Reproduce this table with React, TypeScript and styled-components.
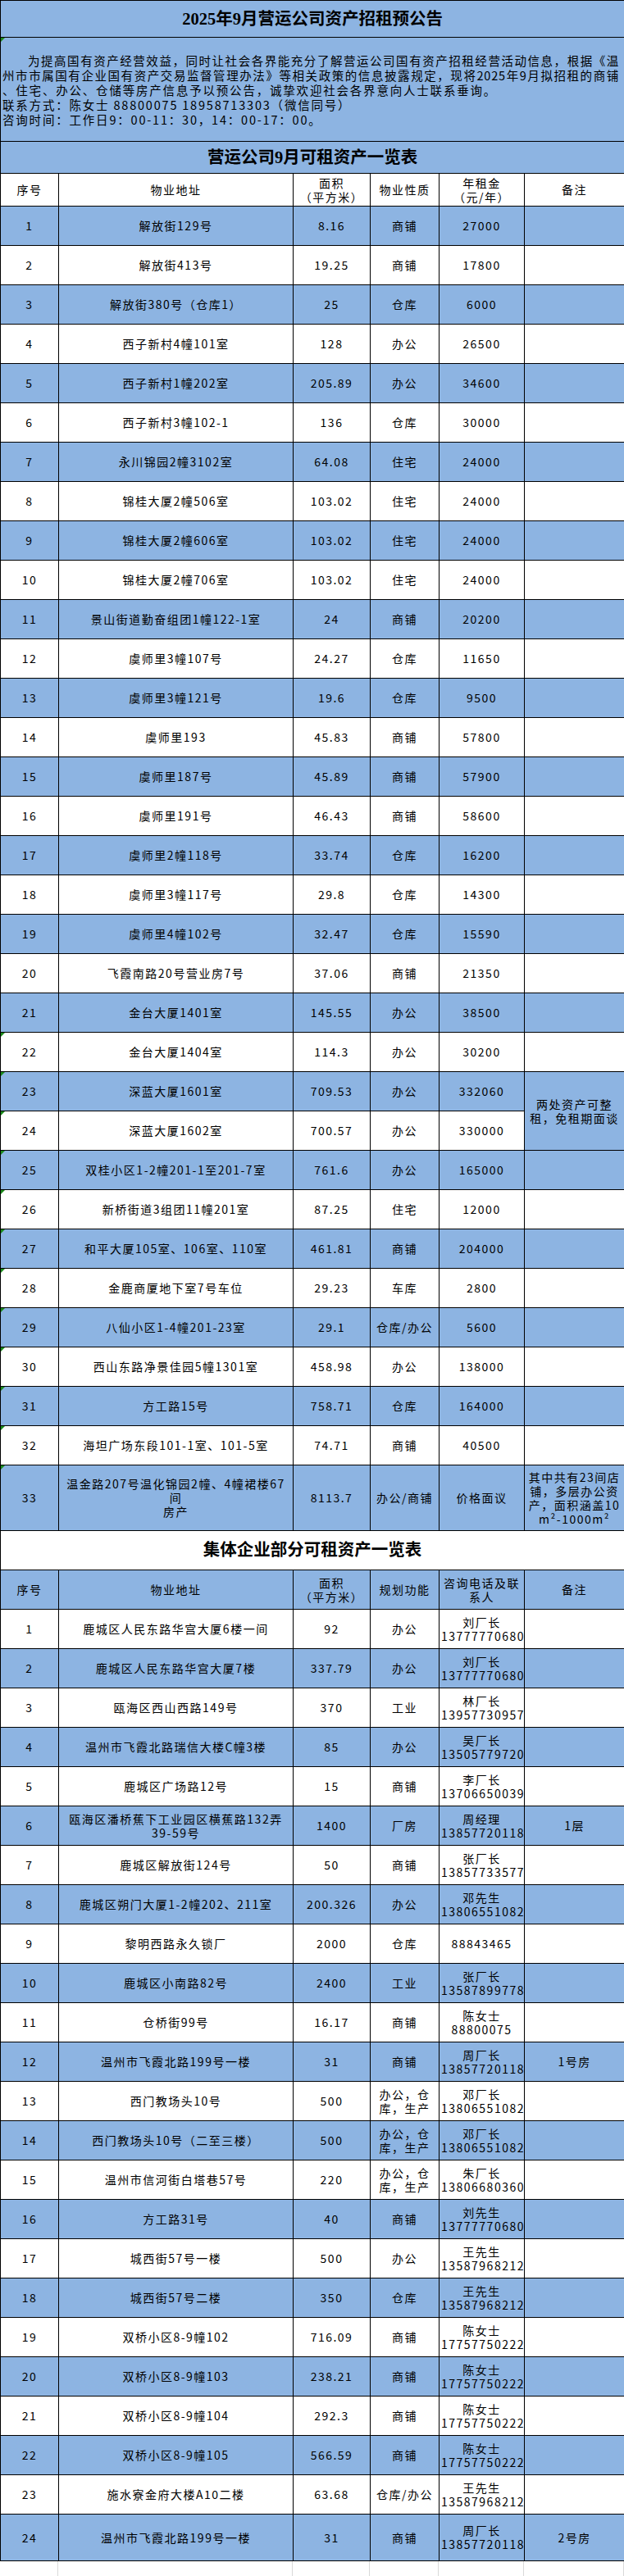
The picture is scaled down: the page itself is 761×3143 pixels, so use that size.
import React from 'react';
import styled, { createGlobalStyle, css } from 'styled-components';

const BLUE = '#8db4e2';
const CELL_FONT = `"Liberation Sans Narrow", "Noto Sans CJK SC", sans-serif`;
const TITLE_FONT = `"Liberation Serif", "Noto Sans CJK SC", serif`;

const GlobalStyle = createGlobalStyle`
    html, body {
        margin: 0;
        padding: 0;
        background: #fff;
    }

    body {
        color: #000;
        font-family: ${CELL_FONT};
    }
`;

type Rental = {
    no: string;
    addr: string;
    area: string;
    kind: string;
    rent: string;
    note?: string;
    flag?: boolean;
};

type Collective = {
    no: string;
    addr: string;
    area: string;
    use: string;
    contact: string;
    note?: string;
};

const state: Rental[] = [
    { no: '1', addr: '解放街129号', area: '8.16', kind: '商铺', rent: '27000' },
    { no: '2', addr: '解放街413号', area: '19.25', kind: '商铺', rent: '17800' },
    { no: '3', addr: '解放街380号（仓库1）', area: '25', kind: '仓库', rent: '6000' },
    { no: '4', addr: '西子新村4幢101室', area: '128', kind: '办公', rent: '26500' },
    { no: '5', addr: '西子新村1幢202室', area: '205.89', kind: '办公', rent: '34600' },
    { no: '6', addr: '西子新村3幢102-1', area: '136', kind: '仓库', rent: '30000' },
    { no: '7', addr: '永川锦园2幢3102室', area: '64.08', kind: '住宅', rent: '24000' },
    { no: '8', addr: '锦桂大厦2幢506室', area: '103.02', kind: '住宅', rent: '24000' },
    { no: '9', addr: '锦桂大厦2幢606室', area: '103.02', kind: '住宅', rent: '24000' },
    { no: '10', addr: '锦桂大厦2幢706室', area: '103.02', kind: '住宅', rent: '24000' },
    { no: '11', addr: '景山街道勤奋组团1幢122-1室', area: '24', kind: '商铺', rent: '20200' },
    { no: '12', addr: '虞师里3幢107号', area: '24.27', kind: '仓库', rent: '11650' },
    { no: '13', addr: '虞师里3幢121号', area: '19.6', kind: '仓库', rent: '9500' },
    { no: '14', addr: '虞师里193', area: '45.83', kind: '商铺', rent: '57800' },
    { no: '15', addr: '虞师里187号', area: '45.89', kind: '商铺', rent: '57900' },
    { no: '16', addr: '虞师里191号', area: '46.43', kind: '商铺', rent: '58600' },
    { no: '17', addr: '虞师里2幢118号', area: '33.74', kind: '仓库', rent: '16200' },
    { no: '18', addr: '虞师里3幢117号', area: '29.8', kind: '仓库', rent: '14300' },
    { no: '19', addr: '虞师里4幢102号', area: '32.47', kind: '仓库', rent: '15590' },
    { no: '20', addr: '飞霞南路20号营业房7号', area: '37.06', kind: '商铺', rent: '21350' },
    { no: '21', addr: '金台大厦1401室', area: '145.55', kind: '办公', rent: '38500' },
    { no: '22', addr: '金台大厦1404室', area: '114.3', kind: '办公', rent: '30200', flag: true },
    { no: '23', addr: '深蓝大厦1601室', area: '709.53', kind: '办公', rent: '332060', flag: true, note: '两处资产可整\n租，免租期面谈' },
    { no: '24', addr: '深蓝大厦1602室', area: '700.57', kind: '办公', rent: '330000', flag: true },
    { no: '25', addr: '双桂小区1-2幢201-1至201-7室', area: '761.6', kind: '办公', rent: '165000', flag: true },
    { no: '26', addr: '新桥街道3组团11幢201室', area: '87.25', kind: '住宅', rent: '12000', flag: true },
    { no: '27', addr: '和平大厦105室、106室、110室', area: '461.81', kind: '商铺', rent: '204000', flag: true },
    { no: '28', addr: '金鹿商厦地下室7号车位', area: '29.23', kind: '车库', rent: '2800', flag: true },
    { no: '29', addr: '八仙小区1-4幢201-23室', area: '29.1', kind: '仓库/办公', rent: '5600', flag: true },
    { no: '30', addr: '西山东路净景佳园5幢1301室', area: '458.98', kind: '办公', rent: '138000', flag: true },
    { no: '31', addr: '方工路15号', area: '758.71', kind: '仓库', rent: '164000', flag: true },
    { no: '32', addr: '海坦广场东段101-1室、101-5室', area: '74.71', kind: '商铺', rent: '40500', flag: true },
    {
        no: '33',
        addr: '温金路207号温化锦园2幢、4幢裙楼67间\n房产',
        area: '8113.7',
        kind: '办公/商铺',
        rent: '价格面议',
        flag: true,
        note: '其中共有23间店\n铺，多层办公资\n产，面积涵盖10\nm²-1000m²',
    },
];

const collective: Collective[] = [
    { no: '1', addr: '鹿城区人民东路华宫大厦6楼一间', area: '92', use: '办公', contact: '刘厂长\n13777770680' },
    { no: '2', addr: '鹿城区人民东路华宫大厦7楼', area: '337.79', use: '办公', contact: '刘厂长\n13777770680' },
    { no: '3', addr: '瓯海区西山西路149号', area: '370', use: '工业', contact: '林厂长\n13957730957' },
    { no: '4', addr: '温州市飞霞北路瑞信大楼C幢3楼', area: '85', use: '办公', contact: '吴厂长\n13505779720' },
    { no: '5', addr: '鹿城区广场路12号', area: '15', use: '商铺', contact: '李厂长\n13706650039' },
    { no: '6', addr: '瓯海区潘桥蕉下工业园区横蕉路132弄\n39-59号', area: '1400', use: '厂房', contact: '周经理\n13857720118', note: '1层' },
    { no: '7', addr: '鹿城区解放街124号', area: '50', use: '商铺', contact: '张厂长\n13857733577' },
    { no: '8', addr: '鹿城区朔门大厦1-2幢202、211室', area: '200.326', use: '办公', contact: '邓先生\n13806551082' },
    { no: '9', addr: '黎明西路永久锁厂', area: '2000', use: '仓库', contact: '88843465' },
    { no: '10', addr: '鹿城区小南路82号', area: '2400', use: '工业', contact: '张厂长\n13587899778' },
    { no: '11', addr: '仓桥街99号', area: '16.17', use: '商铺', contact: '陈女士\n88800075' },
    { no: '12', addr: '温州市飞霞北路199号一楼', area: '31', use: '商铺', contact: '周厂长\n13857720118', note: '1号房' },
    { no: '13', addr: '西门教场头10号', area: '500', use: '办公，仓\n库，生产', contact: '邓厂长\n13806551082' },
    { no: '14', addr: '西门教场头10号（二至三楼）', area: '500', use: '办公，仓\n库，生产', contact: '邓厂长\n13806551082' },
    { no: '15', addr: '温州市信河街白塔巷57号', area: '220', use: '办公，仓\n库，生产', contact: '朱厂长\n13806680360' },
    { no: '16', addr: '方工路31号', area: '40', use: '商铺', contact: '刘先生\n13777770680' },
    { no: '17', addr: '城西街57号一楼', area: '500', use: '办公', contact: '王先生\n13587968212' },
    { no: '18', addr: '城西街57号二楼', area: '350', use: '仓库', contact: '王先生\n13587968212' },
    { no: '19', addr: '双桥小区8-9幢102', area: '716.09', use: '商铺', contact: '陈女士\n17757750222' },
    { no: '20', addr: '双桥小区8-9幢103', area: '238.21', use: '商铺', contact: '陈女士\n17757750222' },
    { no: '21', addr: '双桥小区8-9幢104', area: '292.3', use: '商铺', contact: '陈女士\n17757750222' },
    { no: '22', addr: '双桥小区8-9幢105', area: '566.59', use: '商铺', contact: '陈女士\n17757750222' },
    { no: '23', addr: '施水寮金府大楼A10二楼', area: '63.68', use: '仓库/办公', contact: '王先生\n13587968212' },
    { no: '24', addr: '温州市飞霞北路199号一楼', area: '31', use: '商铺', contact: '周厂长\n13857720118', note: '2号房' },
];

const COLS = [71, 286, 94, 84, 104, 122];

export default function App() {
    return (
        <>
            <GlobalStyle />
            <StyledSheet>
                <colgroup>
                    {COLS.map((w, i) => (
                        <StyledCol key={i} $w={w} />
                    ))}
                </colgroup>
                <tbody>
                    <StyledRow $h={45} $blue>
                        <StyledTitleCell colSpan={6}>2025年9月营运公司资产招租预公告</StyledTitleCell>
                    </StyledRow>
                    <StyledRow $h={127} $blue>
                        <StyledIntroCell colSpan={6} $flag>
                            <StyledIntroLine $justify $indent>
                                为提高国有资产经营效益，同时让社会各界能充分了解营运公司国有资产招租经营活动信息，根据《温
                            </StyledIntroLine>
                            <StyledIntroLine $justify>
                                州市市属国有企业国有资产交易监督管理办法》等相关政策的信息披露规定，现将2025年9月拟招租的商铺
                            </StyledIntroLine>
                            <StyledIntroLine>、住宅、办公、仓储等房产信息予以预公告，诚挚欢迎社会各界意向人士联系垂询。</StyledIntroLine>
                            <StyledIntroLine>联系方式：陈女士 88800075 18958713303（微信同号）</StyledIntroLine>
                            <StyledIntroLine>咨询时间：工作日9：00-11：30，14：00-17：00。</StyledIntroLine>
                        </StyledIntroCell>
                    </StyledRow>
                    <StyledRow $h={39} $blue>
                        <StyledTitleCell colSpan={6}>营运公司9月可租资产一览表</StyledTitleCell>
                    </StyledRow>
                    <StyledRow $h={40}>
                        <StyledCell>序号</StyledCell>
                        <StyledCell>物业地址</StyledCell>
                        <StyledCell>{'面积\n（平方米）'}</StyledCell>
                        <StyledCell>物业性质</StyledCell>
                        <StyledCell>{'年租金\n（元/年）'}</StyledCell>
                        <StyledCell>备注</StyledCell>
                    </StyledRow>
                    {state.map((r, i) => (
                        <StyledRow key={r.no} $h={r.no === '33' ? 80 : 48} $blue={i % 2 === 0}>
                            <StyledCell $flag={r.flag}>{r.no}</StyledCell>
                            <StyledCell>{r.addr}</StyledCell>
                            <StyledCell>{r.area}</StyledCell>
                            <StyledCell>{r.kind}</StyledCell>
                            <StyledCell>{r.rent}</StyledCell>
                            {r.no === '23' ? (
                                <StyledNoteCell rowSpan={2} $blue>
                                    {r.note}
                                </StyledNoteCell>
                            ) : r.no === '24' ? null : (
                                <StyledNoteCell>{r.note}</StyledNoteCell>
                            )}
                        </StyledRow>
                    ))}
                    <StyledRow $h={48}>
                        <StyledTitleCell colSpan={6}>集体企业部分可租资产一览表</StyledTitleCell>
                    </StyledRow>
                    <StyledRow $h={48} $blue>
                        <StyledCell>序号</StyledCell>
                        <StyledCell>物业地址</StyledCell>
                        <StyledCell>{'面积\n（平方米）'}</StyledCell>
                        <StyledCell>规划功能</StyledCell>
                        <StyledCell>{'咨询电话及联\n系人'}</StyledCell>
                        <StyledCell>备注</StyledCell>
                    </StyledRow>
                    {collective.map((r, i) => (
                        <StyledRow key={r.no} $h={r.no === '24' ? 57 : 48} $blue={i % 2 === 1}>
                            <StyledCell>{r.no}</StyledCell>
                            <StyledCell>{r.addr}</StyledCell>
                            <StyledCell>{r.area}</StyledCell>
                            <StyledCell>{r.use}</StyledCell>
                            <StyledCell>{r.contact}</StyledCell>
                            <StyledCell>{r.note}</StyledCell>
                        </StyledRow>
                    ))}
                </tbody>
            </StyledSheet>
            <StyledEmptyGrid>
                {COLS.map((w, i) => (
                    <StyledEmptyCell key={i} />
                ))}
            </StyledEmptyGrid>
        </>
    );
}

const StyledSheet = styled.table`
    border-collapse: collapse;
    table-layout: fixed;
    width: 761px;
`;

const StyledCol = styled.col<{ $w: number }>`
    width: ${(p) => p.$w}px;
`;

const StyledRow = styled.tr<{ $h: number; $blue?: boolean }>`
    background: ${(p) => (p.$blue ? BLUE : '#fff')};
    height: ${(p) => p.$h}px;
`;

const StyledCell = styled.td<{ $flag?: boolean; $blue?: boolean }>`
    border: 1px solid #000;
    font-family: ${CELL_FONT};
    font-size: 14px;
    letter-spacing: 1.5px;
    line-height: 17px;
    padding: 0 2px;
    position: relative;
    text-align: center;
    vertical-align: middle;
    white-space: pre-line;
    ${(p) => p.$blue && css`background: ${BLUE};`}

    ${(p) =>
        p.$flag &&
        css`
            &::before {
                border-left: 5px solid #1a8a1a;
                border-bottom: 5px solid transparent;
                content: '';
                height: 0;
                left: 0;
                position: absolute;
                top: 0;
                width: 0;
            }
        `}
`;

const StyledNoteCell = styled(StyledCell)`
    padding: 0 1px;
`;

const StyledTitleCell = styled(StyledCell)`
    font-family: ${TITLE_FONT};
    font-size: 20.5px;
    font-weight: bold;
    letter-spacing: 0;
`;

const StyledIntroCell = styled(StyledCell)`
    font-size: 14.5px;
    letter-spacing: 1.8px;
    line-height: 18px;
    padding: 2px 6px 0 2px;
    text-align: left;
    white-space: normal;
`;

const StyledIntroLine = styled.div<{ $justify?: boolean; $indent?: boolean }>`
    ${(p) =>
        p.$justify &&
        css`
            letter-spacing: 0.8px;
            text-align: justify;
            text-align-last: justify;
        `}

    ${(p) => p.$indent && css`text-indent: 31px;`}
`;

const StyledEmptyGrid = styled.div`
    display: grid;
    grid-template-columns: ${COLS.map((w) => `${w}px`).join(' ')};
    height: 20px;
    width: 761px;
`;

const StyledEmptyCell = styled.div`
    border-right: 1px solid #d9d9d9;
    box-sizing: border-box;
`;
